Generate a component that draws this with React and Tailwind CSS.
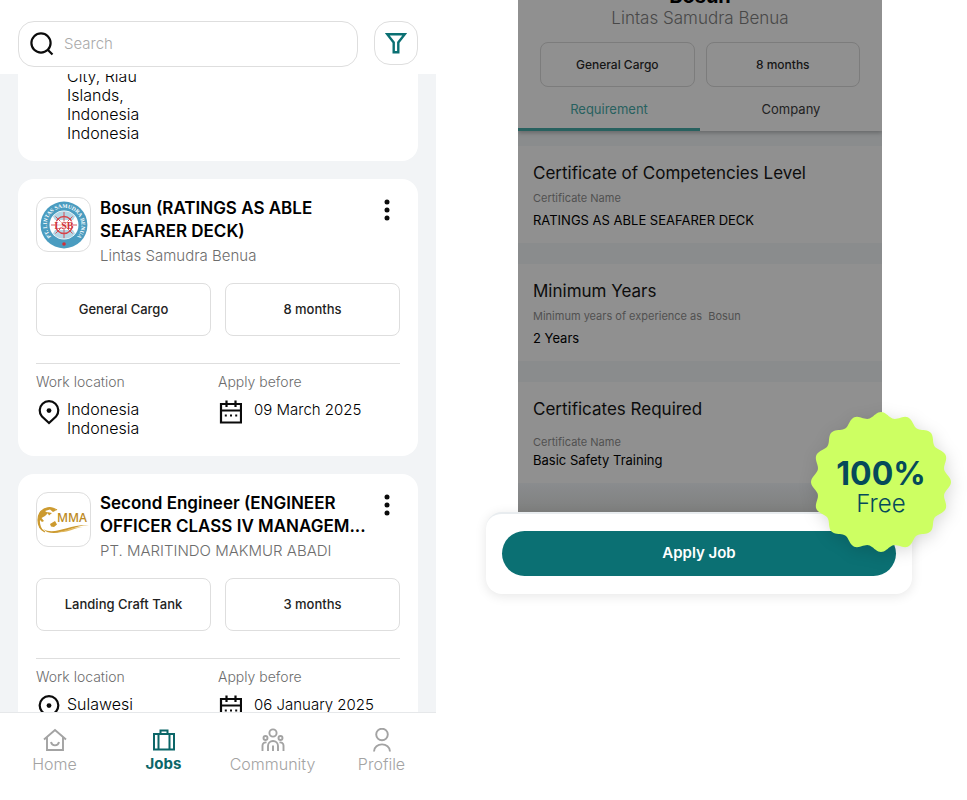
import React from 'react';

const jobs = [
  {
    title: ['Bosun (RATINGS AS ABLE', 'SEAFARER DECK)'],
    company: 'Lintas Samudra Benua',
    logo: 'lsb',
    vessel: 'General Cargo',
    duration: '8 months',
    location: ['Indonesia', 'Indonesia'],
    deadline: '09 March 2025',
  },
  {
    title: ['Second Engineer (ENGINEER', 'OFFICER CLASS IV MANAGEM...'],
    company: 'PT. MARITINDO MAKMUR ABADI',
    logo: 'mma',
    vessel: 'Landing Craft Tank',
    duration: '3 months',
    location: ['Sulawesi'],
    deadline: '06 January 2025',
  },
];

const SearchIcon = () => (
  <svg width="24" height="24" viewBox="0 0 24 24" fill="none" stroke="#0b0b0b" strokeWidth="2.2">
    <circle cx="11" cy="11" r="9.6" />
    <path d="M17.5 17.5 22.5 22.5" />
  </svg>
);

const FilterIcon = () => (
  <svg width="22" height="22" viewBox="0 0 22 22" fill="none" stroke="#0b7073" strokeWidth="2.4">
    <path d="M2.200 2.200H19.800L13.300 10.500V20.300H8.700V10.500Z" />
  </svg>
);

const PinIcon = () => (
  <svg className="shrink-0" width="22" height="25" viewBox="0 0 22 25" fill="none" stroke="#0b0b0b" strokeWidth="2.2">
    <path d="M11 23 4 16.6A9.3 9.3 0 1 1 18 16.6Z" />
    <circle cx="11" cy="10.6" r="2.4" fill="#0b0b0b" stroke="none" />
  </svg>
);

const CalendarIcon = () => (
  <svg className="shrink-0" width="24" height="24" viewBox="0 0 24 24" fill="none" stroke="#0b0b0b" strokeWidth="2.2">
    <path d="M3 4H23V22.500H3ZM3 10.5H23M8.500 0.5V7M17.500 0.5V7" />
    <path d="M6.800 15.500H8.800M12 15.500H14M17.200 15.500H19.200" />
  </svg>
);

const HomeIcon = () => (
  <svg width="24" height="24" viewBox="0 0 24 24" fill="none" stroke="currentColor" strokeWidth="1.9">
    <path d="M1 11.5 12 2 23 11.5M4 9.5V22H20V9.5" />
    <path d="M8 14C9 18.500 15 18.500 16 14" />
  </svg>
);

const JobsIcon = () => (
  <svg width="24" height="24" viewBox="0 0 24 24" fill="none" stroke="currentColor" strokeWidth="2">
    <path d="M2 6H22V21.5H2ZM6.500 6V21.5M17.500 6V21.5M8.5 6V2.5H15.5V6" />
  </svg>
);

const CommunityIcon = () => (
  <svg width="24" height="24" viewBox="0 0 24 24" fill="none" stroke="currentColor" strokeWidth="1.9">
    <circle cx="12" cy="5" r="3.6" />
    <circle cx="4.5" cy="10" r="2" />
    <circle cx="19.5" cy="10" r="2" />
    <path d="M7 23V18A5 5 0 0 1 17 18V23M12 17.5V23M1.5 23V17.5A3 3 0 0 1 5.5 14.6M22.5 23V17.5A3 3 0 0 0 18.5 14.6" />
  </svg>
);

const ProfileIcon = () => (
  <svg width="24" height="24" viewBox="0 0 24 24" fill="none" stroke="currentColor" strokeWidth="1.9">
    <circle cx="12" cy="6.500" r="5.800" />
    <path d="M4 23.5C4 14 20 14 20 23.5" />
  </svg>
);

const LsbLogo = () => (
  <svg width="50" height="50" viewBox="0 0 50 50">
    <circle cx="25" cy="25" r="23.4" fill="#4a9cc0" />
    <circle cx="25" cy="25" r="14.500" fill="#fff" />
    <path d="M14 16.500A14 14 0 0 1 36 16.500L34 20H16ZM14 33.500A14 14 0 0 0 36 33.500L34 30H16Z" fill="#b4d7e6" />
    <defs>
      <path id="lsb-ring" d="M14.500 38.800A17.300 17.300 0 1 1 35.500 38.800" />
    </defs>
    <text fill="#fff" fontFamily="Liberation Serif, serif" fontWeight="700" fontSize="5.500">
      <textPath href="#lsb-ring" startOffset="50%" textAnchor="middle">PT. LINTAS SAMUDRA BENUA</textPath>
    </text>
    <g fill="none" stroke="#d5434a">
      <circle cx="25" cy="25" r="8.500" strokeWidth="1.300" />
      <path strokeWidth="0.900" d="M25 12V38M12 25H38M16.500 16.500 33.500 33.500M33.500 16.500 16.500 33.500" />
    </g>
    <rect x="16" y="21" width="18" height="8" fill="#fff" opacity="0.6" />
    <text x="25" y="28.500" fill="#cf3039" textAnchor="middle" fontFamily="Liberation Serif, serif" fontWeight="700" fontSize="10">LSB</text>
    <circle cx="25" cy="44" r="1.800" fill="#cf3039" />
  </svg>
);

const MmaLogo = () => (
  <svg width="53" height="53" viewBox="0 0 53 53">
    <path d="M20 17C11 11 1 17 1 27C1 33 4 37 8 39" fill="none" stroke="#cc9a2f" strokeWidth="1.200" />
    <path d="M13 14.500C5 15 1 20 1 27 1 32 3 37 7 39 4 35 2.500 31 3 27L5 29 7 28 4.500 25 8 23 11 20 8 18 13 16.500 16 19 19 17.500C18 15.500 15 14.500 13 14.500Z" fill="#cc9a2f" />
    <path d="M13 31 18 28 20 31.500 17 34 14 33.500ZM10 19 15 20 12 22.500Z" fill="#cc9a2f" />
    <path d="M6 36C18 43 31 31 52 32 34 33 24 43 10 39Z" fill="#cc9a2f" />
    <path d="M20 39C30 38 34 34 46 34 36 35 32 40 20 39Z" fill="#dfb75f" />
    <text x="20" y="29" fill="#bd8b25" fontFamily="Open Sans, sans-serif" fontWeight="600" fontSize="12">MMA</text>
  </svg>
);

const Chip = ({ children }) => (
  <div className="flex h-[53px] items-center justify-center rounded-lg border border-[#dedede] text-[13px] font-medium text-[#222]">
    {children}
  </div>
);

const JobCard = ({ job }) => (
  <article className="shrink-0 rounded-2xl bg-white p-[18px]">
    <div className="flex items-start">
      <div className="flex h-[55px] w-[55px] shrink-0 items-center justify-center overflow-hidden rounded-xl border border-[#dedede]">
        {job.logo === 'lsb' ? <LsbLogo /> : <MmaLogo />}
      </div>
      <div className="ml-[9px] min-w-0 flex-1">
        <h2 className="text-[17px] leading-[23px] font-semibold whitespace-nowrap text-black">
          {job.title.map((line) => (
            <span key={line} className="block">{line}</span>
          ))}
        </h2>
        <p className="mt-0.5 text-[15px] leading-[22px] font-light text-[#6d6d6d]">{job.company}</p>
      </div>
      <button type="button" aria-label="More options" className="flex h-[26px] w-[26px] shrink-0 items-center justify-center">
        <svg width="6" height="22" viewBox="0 0 6 22" fill="#0b0b0b">
          <circle cx="3" cy="3" r="2.5" />
          <circle cx="3" cy="11" r="2.5" />
          <circle cx="3" cy="19" r="2.5" />
        </svg>
      </button>
    </div>
    <div className="mt-4 grid grid-cols-2 gap-[14px]">
      <Chip>{job.vessel}</Chip>
      <Chip>{job.duration}</Chip>
    </div>
    <div className="mt-[27px] grid grid-cols-2 border-t border-[#dedede] pt-2">
      <div>
        <p className="text-sm leading-5 font-light text-[#6d6d6d]">Work location</p>
        <div className="mt-2 flex gap-[7px] pl-[2px]">
          <PinIcon />
          <p className="text-base leading-[19px] font-light text-black">
            {job.location.map((line, i) => (
              <span key={i} className="block">{line}</span>
            ))}
          </p>
        </div>
      </div>
      <div>
        <p className="text-sm leading-5 font-light text-[#6d6d6d]">Apply before</p>
        <div className="mt-2 flex gap-3">
          <CalendarIcon />
          <p className="text-[15px] leading-[19px] font-light text-black">{job.deadline}</p>
        </div>
      </div>
    </div>
  </article>
);

const navItems = [
  { label: 'Home', icon: HomeIcon },
  { label: 'Jobs', icon: JobsIcon, active: true },
  { label: 'Community', icon: CommunityIcon },
  { label: 'Profile', icon: ProfileIcon },
];

const JobList = () => (
  <main className="flex h-screen min-w-0 flex-col bg-[#f2f4f6]">
    <header className="flex h-[74px] shrink-0 items-start gap-4 bg-white px-[18px] pt-[21px]">
      <label className="flex h-[46px] min-w-0 flex-1 items-center gap-[10px] rounded-2xl border border-[#dedede] pl-[11px]">
        <SearchIcon />
        <input
          type="search"
          aria-label="Search"
          placeholder="Search"
          className="min-w-0 flex-1 bg-transparent text-[15px] font-light outline-none placeholder:text-[#aaa]"
        />
      </label>
      <button type="button" aria-label="Filter" className="flex h-11 w-11 items-center justify-center rounded-2xl border border-[#dedede]">
        <FilterIcon />
      </button>
    </header>

    <div className="flex min-h-0 flex-1 flex-col gap-[18px] overflow-hidden px-[18px]">
      {/* tail of the card that is scrolled under the header */}
      <article className="-mt-[7px] shrink-0 rounded-b-2xl bg-white pb-[18px] pl-[49px]">
        <p className="w-24 text-base leading-[19px] font-light text-black">
          City, Riau Islands, Indonesia Indonesia
        </p>
      </article>
      {jobs.map((job) => (
        <JobCard key={job.company} job={job} />
      ))}
    </div>

    <nav className="grid h-[88px] shrink-0 grid-cols-4 border-t border-[#e6e8ea] bg-white pt-[15px]">
      {navItems.map(({ label, icon: Icon, active }) => (
        <a
          key={label}
          href="#"
          className={`flex flex-col items-center leading-6 ${active ? 'text-[15px] font-bold text-[#0b6668]' : 'text-base font-light text-[#a3a3a3]'}`}
        >
          <Icon />
          {label}
        </a>
      ))}
    </nav>
  </main>
);

const Requirement = ({ title, label, value, spaced }) => (
  <section className="bg-[#909090] px-[15px] pt-[15px] pb-[14px]">
    <h3 className="text-[17px] leading-6 text-[#0c0c0c]">{title}</h3>
    <p className={`text-[11px] leading-[18px] whitespace-pre-wrap text-[#505050] ${spaced ? 'mt-3' : 'mt-1'}`}>{label}</p>
    <p className={`text-[13px] leading-[18px] text-black ${spaced ? 'mt-0' : 'mt-1'}`}>{value}</p>
  </section>
);

const BADGE_POINTS = Array.from({ length: 320 }, (_, i) => {
  const t = (i / 320) * Math.PI * 2;
  const r = 67.2 + 2.8 * Math.cos(16 * t);
  return `${(70 + r * Math.sin(t)).toFixed(2)},${(70 - r * Math.cos(t)).toFixed(2)}`;
}).join(' ');

const FreeBadge = () => (
  <div className="absolute -top-[102px] -right-[39px] flex h-[140px] w-[140px] flex-col items-center pt-[44px] text-[#054a5a]">
    <svg className="absolute inset-0 overflow-visible drop-shadow-[2px_4px_8px_rgba(0,0,0,0.14)]" width="140" height="140" viewBox="0 0 140 140">
      <polygon points={BADGE_POINTS} fill="#cdff62" />
    </svg>
    <strong className="relative text-[32px] leading-9 font-bold">100%</strong>
    <span className="relative text-2xl leading-6 font-light">Free</span>
  </div>
);

const JobDetail = () => (
  <aside className="min-w-0">
    <div className="mr-[85px] ml-[82px] overflow-hidden bg-[#8a8c8d]">
      <div className="relative bg-[#909090] shadow-[0_2px_4px_rgba(0,0,0,0.25)]">
        <div className="px-[22px] text-center">
          <h2 className="-mt-4 text-xl leading-6 font-bold text-black">Bosun</h2>
          <p className="text-[17px] leading-5 font-light text-[#484848]">Lintas Samudra Benua</p>
          <div className="mt-[14px] grid grid-cols-2 gap-[11px] text-xs font-medium text-[#161616]">
            <div className="flex h-[45px] items-center justify-center rounded-lg border border-[#7c7c7c]">General Cargo</div>
            <div className="flex h-[45px] items-center justify-center rounded-lg border border-[#7c7c7c]">8 months</div>
          </div>
        </div>
        <div role="tablist" className="grid grid-cols-2 text-[13px]">
          <button type="button" role="tab" aria-selected="true" className="h-11 border-b-[3px] border-[#28615f] pt-1 text-[#28615f]">
            Requirement
          </button>
          <button type="button" role="tab" aria-selected="false" className="h-11 border-b-[3px] border-transparent pt-1 text-[#222]">
            Company
          </button>
        </div>
      </div>
      <div className="flex flex-col gap-[21px] pt-[15px]">
        <Requirement title="Certificate of Competencies Level" label="Certificate Name" value="RATINGS AS ABLE SEAFARER DECK" />
        <Requirement title="Minimum Years" label="Minimum years of experience as  Bosun" value="2 Years" />
        <Requirement title="Certificates Required" label="Certificate Name" value="Basic Safety Training" spaced />
      </div>
      <div className="h-[29px] bg-linear-to-b from-[#8a8c8e] to-[#7f807f]" />
    </div>

    <div className="relative mr-[55px] ml-[50px] rounded-2xl border-t-2 border-[#e8ecef] bg-white px-4 pt-[17px] pb-[18px] shadow-[0_2px_12px_rgba(0,0,0,0.1)]">
      <button type="button" className="block h-[45px] w-full rounded-full bg-[#0b7073] text-[15px] font-semibold text-white">
        Apply Job
      </button>
      <FreeBadge />
    </div>
  </aside>
);

const App = () => (
  <div className="grid min-h-screen grid-cols-[436fr_531fr] overflow-hidden bg-white font-['Inter',sans-serif]">
    <JobList />
    <JobDetail />
  </div>
);

export default App;
